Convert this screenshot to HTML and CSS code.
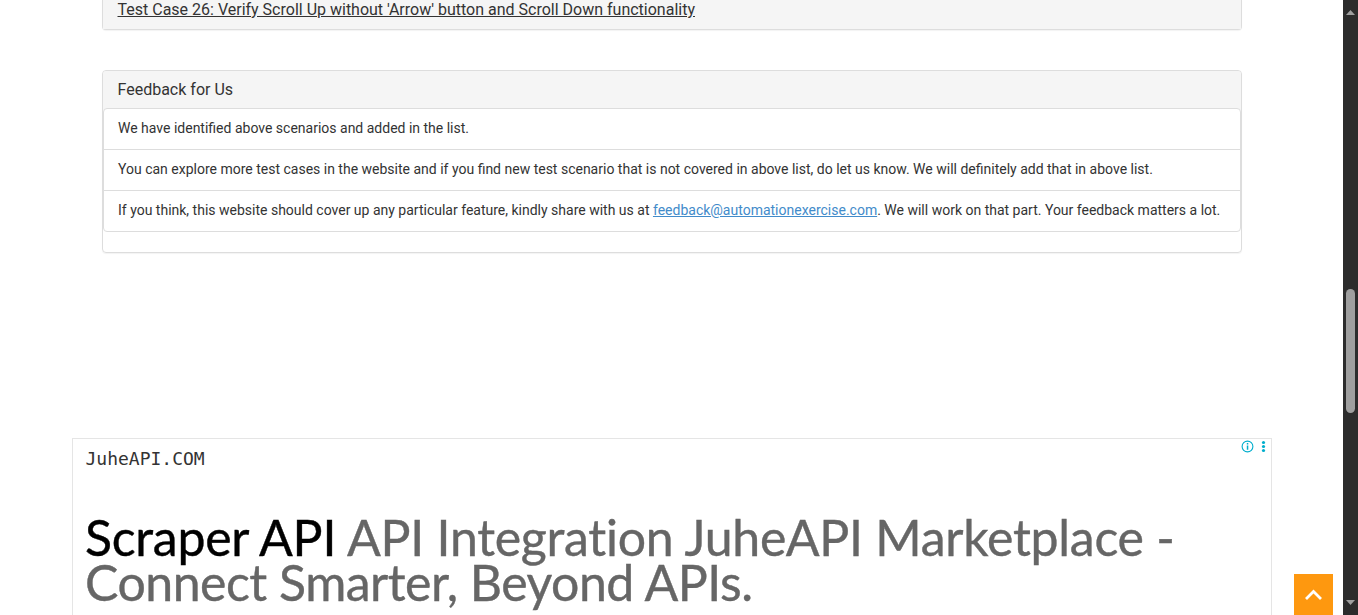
FILE: index.html
```html
<!DOCTYPE html>
<html lang="en">
<head>
<meta charset="utf-8">
<title>Test Cases</title>
<link rel="stylesheet" href="styles.css">
</head>
<body>
<div class="window">
  <main class="page">
    <section class="panel panel-first">
      <h4 class="panel-heading"><u>Test Case 26: Verify Scroll Up without 'Arrow' button and Scroll Down functionality</u></h4>
    </section>
    <section class="panel panel-feedback">
      <h4 class="panel-heading">Feedback for Us</h4>
      <ul class="list">
        <li>We have identified above scenarios and added in the list.</li>
        <li>You can explore more test cases in the website and if you find new test scenario that is not covered in above list, do let us know. We will definitely add that in above list.</li>
        <li>If you think, this website should cover up any particular feature, kindly share with us at <a href="#">feedback@automationexercise.com</a>. We will work on that part. Your feedback matters a lot.</li>
      </ul>
    </section>
    <aside class="ad">
      <div class="ad-brand">JuheAPI.COM</div>
      <div class="ad-title">
        <div class="ad-line"><b>Scraper API</b> API Integration JuheAPI Marketplace -</div>
        <div class="ad-line ad-line-tight">Connect Smarter, Beyond APIs.</div>
      </div>
      <svg class="ad-info" width="30" height="15" viewBox="0 0 30 15">
        <circle cx="6.5" cy="7.5" r="5.4" fill="none" stroke="#00aecd" stroke-width="1.1"/>
        <path d="M5.8 6.5h1.5v4.3H5.8zM5.8 4h1.5v1.5H5.8z" fill="#00aecd"/>
        <g fill="#00aecd"><circle cx="22.5" cy="3.5" r="1.6"/><circle cx="22.5" cy="7.5" r="1.6"/><circle cx="22.5" cy="11.5" r="1.6"/></g>
      </svg>
    </aside>
  </main>
  <div class="scrollbar">
    <svg width="9" height="5" viewBox="0 0 9 5"><path d="M0 5 4.5 0 9 5z" fill="#9f9f9f"/></svg>
    <div class="thumb"></div>
    <svg width="9" height="5" viewBox="0 0 9 5"><path d="M0 0h9L4.5 5z" fill="#9f9f9f"/></svg>
  </div>
  <a class="scroll-up" href="#" aria-label="Scroll up">
    <svg width="39" height="41" viewBox="0 0 39 41"><path d="M12 25l7.5-7.5L27 25" fill="none" stroke="#fff" stroke-width="2.8"/></svg>
  </a>
</div>
</body>
</html>
```
FILE: styles.css
```css
* { box-sizing: border-box; }
body { margin: 0; background: #fff; font: 14px/20px Roboto, sans-serif; color: #333; }
.window { position: relative; display: flex; height: 615px; overflow: hidden; }
.page { flex: 1; min-width: 0; }
.panel { width: 1140px; margin: 0 0 0 102px; border: 1px solid #ddd; border-radius: 4px; background: #fff; box-shadow: 0 1px 1px rgba(0,0,0,.05); }
.panel-first { height: 30px; border-top: 0; border-radius: 0 0 4px 4px; background: #f5f5f5; }
.panel-heading { margin: 0; height: 37px; padding: 10px 15px 10px 14.5px; border-radius: 3px 3px 0 0; background: #f5f5f5; font-size: 16px; font-weight: 400; line-height: 18px; white-space: nowrap; }
.panel-first .panel-heading { height: 29px; padding-top: 0; padding-bottom: 0; border-radius: 0; line-height: 19px; }
.panel-feedback { height: 183px; margin-top: 40px; background: linear-gradient(#f5f5f5 45px, #fff 45px); }
.list { margin: 0; padding: 0; list-style: none; border: 1px solid #ddd; border-radius: 4px; background: #fff; }
.list li { height: 41px; padding: 9px 14px; border-bottom: 1px solid #ddd; white-space: nowrap; }
.list li:last-child { height: 40px; border-bottom: 0; }
.list a { color: #428bca; text-decoration: underline; }
.ad { position: relative; width: 1200px; height: 250px; margin: 185px 0 0 72px; padding: 9px 12px; border: 1px solid #e5e5e5; }
.ad-brand { padding-left: 0.5px; font: 18px/21px "DejaVu Sans Mono", monospace; }
.ad-title { margin-top: 46px; color: #666; font: 50px/45px Lato, sans-serif; white-space: nowrap; -webkit-text-stroke: 0.4px; }
.ad-line { letter-spacing: -0.27px; }
.ad-line-tight { letter-spacing: -0.5px; }
.ad-title b { color: #000; font-weight: 400; }
.ad-info { position: absolute; top: 0; right: 0; }
.scrollbar { display: flex; flex-direction: column; align-items: center; width: 15px; padding: 10px 0; background: #2c2c2c; }
.thumb { width: 9px; height: 124px; margin: 274px 0 187px; border-radius: 5px; background: #9f9f9f; }
.scroll-up { position: absolute; right: 25px; bottom: 0; width: 39px; height: 41px; background: #fe980f; }
```
